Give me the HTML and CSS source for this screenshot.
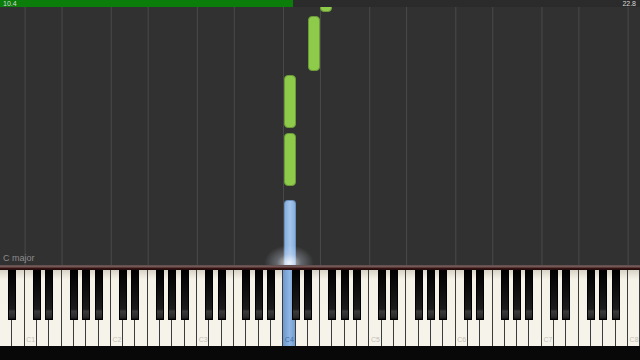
FILE: index.html
```html
<!DOCTYPE html>
<html lang="en">
<head>
    <meta charset="UTF-8">
    <meta name="viewport" content="width=device-width, initial-scale=1.0">
    <title>Piano roll</title>
    <link rel="stylesheet" href="styles.css">
</head>
<body>

    <div class="player">
        <div class="progress">
            <div class="progress-fill"></div>
            <span class="time time-now">10.4</span>
            <span class="time time-end">22.8</span>
        </div>

        <div class="roll">
            <div class="note green" style="left: 320px; top: -6px; height: 11px;"></div>
            <div class="note green" style="left: 308px; top: 9px; height: 55px;"></div>
            <div class="note green" style="left: 283.5px; top: 68px; height: 53px;"></div>
            <div class="note green" style="left: 283.5px; top: 126px; height: 53px;"></div>
            <div class="note blue" style="left: 283.5px; top: 193px; height: 70px;"></div>
            <div class="glow"></div>
            <span class="key-name">C major</span>
        </div>

        <div class="rail"></div>

        <div class="keys">
            <!-- A0 B0 -->
            <div class="key"><i class="black"></i></div>
            <div class="key"></div>
            <!-- octave 1 -->
            <div class="key"><span class="lbl">C1</span><i class="black"></i></div>
            <div class="key"><i class="black"></i></div>
            <div class="key"></div>
            <div class="key"><i class="black"></i></div>
            <div class="key"><i class="black"></i></div>
            <div class="key"><i class="black"></i></div>
            <div class="key"></div>
            <!-- octave 2 -->
            <div class="key"><span class="lbl">C2</span><i class="black"></i></div>
            <div class="key"><i class="black"></i></div>
            <div class="key"></div>
            <div class="key"><i class="black"></i></div>
            <div class="key"><i class="black"></i></div>
            <div class="key"><i class="black"></i></div>
            <div class="key"></div>
            <!-- octave 3 -->
            <div class="key"><span class="lbl">C3</span><i class="black"></i></div>
            <div class="key"><i class="black"></i></div>
            <div class="key"></div>
            <div class="key"><i class="black"></i></div>
            <div class="key"><i class="black"></i></div>
            <div class="key"><i class="black"></i></div>
            <div class="key"></div>
            <!-- octave 4 -->
            <div class="key on"><span class="lbl">C4</span><i class="black"></i></div>
            <div class="key"><i class="black"></i></div>
            <div class="key"></div>
            <div class="key"><i class="black"></i></div>
            <div class="key"><i class="black"></i></div>
            <div class="key"><i class="black"></i></div>
            <div class="key"></div>
            <!-- octave 5 -->
            <div class="key"><span class="lbl">C5</span><i class="black"></i></div>
            <div class="key"><i class="black"></i></div>
            <div class="key"></div>
            <div class="key"><i class="black"></i></div>
            <div class="key"><i class="black"></i></div>
            <div class="key"><i class="black"></i></div>
            <div class="key"></div>
            <!-- octave 6 -->
            <div class="key"><span class="lbl">C6</span><i class="black"></i></div>
            <div class="key"><i class="black"></i></div>
            <div class="key"></div>
            <div class="key"><i class="black"></i></div>
            <div class="key"><i class="black"></i></div>
            <div class="key"><i class="black"></i></div>
            <div class="key"></div>
            <!-- octave 7 -->
            <div class="key"><span class="lbl">C7</span><i class="black"></i></div>
            <div class="key"><i class="black"></i></div>
            <div class="key"></div>
            <div class="key"><i class="black"></i></div>
            <div class="key"><i class="black"></i></div>
            <div class="key"><i class="black"></i></div>
            <div class="key"></div>
            <!-- C8 -->
            <div class="key"><span class="lbl">C8</span></div>
        </div>

        <div class="base"></div>
    </div>

</body>
</html>
```

FILE: styles.css
```css
body {
    margin: 0;
    padding: 0;
    background-color: #000;
    font-family: "Liberation Sans", Arial, sans-serif;
}
.player {
    width: 640px;
    height: 360px;
    display: flex;
    flex-direction: column;
    overflow: hidden;
}
.progress {
    position: relative;
    height: 7px;
    flex: none;
    background-color: #2b2b2b;
    z-index: 2;
}
.progress-fill {
    width: 293px;
    height: 100%;
    background-color: #0a7d0a;
}
.time {
    position: absolute;
    top: 0;
    font-size: 7px;
    line-height: 7px;
    color: #d8d8d8;
}
.time-now {
    left: 3px;
}
.time-end {
    right: 4px;
}
.roll {
    position: relative;
    height: 258px;
    flex: none;
    overflow: hidden;
    background-color: #313131;
    background-image:
        linear-gradient(to right, #494949 1px, transparent 1px),
        linear-gradient(to right, #494949 1px, transparent 1px);
    background-size: 86.1538px 100%, 86.1538px 100%;
    background-position: 24.615px 0, 61.538px 0;
    background-repeat: repeat-x;
}
.note {
    position: absolute;
    width: 12px;
    box-sizing: border-box;
    border-radius: 4px;
}
.green {
    background-color: #8ecb4b;
    border: 1px solid #6c9a38;
}
.blue {
    background: linear-gradient(to right, #86afdd, #a4c5ea 50%, #86afdd);
    border: 1px solid #6a90c0;
    border-bottom: none;
    border-radius: 4px 4px 0 0;
}
.glow {
    position: absolute;
    left: 264px;
    bottom: -16px;
    width: 50px;
    height: 36px;
    background: radial-gradient(ellipse at center, rgba(255, 255, 255, 0.8) 0, rgba(210, 222, 240, 0.3) 35%, rgba(255, 255, 255, 0) 70%);
}
.key-name {
    position: absolute;
    left: 3px;
    bottom: 2px;
    font-size: 9px;
    color: #8c8c8c;
}
.rail {
    height: 5px;
    flex: none;
    background: linear-gradient(to bottom, #5e4d4d 0, #7a5b5b 40%, #3a1414 60%, #1e0a0a 100%);
}
.keys {
    height: 76px;
    flex: none;
    display: flex;
    background-color: #2a2a2a;
}
.key {
    position: relative;
    flex: 1;
    display: flex;
    flex-direction: column;
    justify-content: flex-end;
    align-items: center;
    background: linear-gradient(to bottom, #d8d3c6 0, #f5f2e8 12%, #f6f3ea 100%);
    box-shadow: inset -1px 0 #3c3c3c;
}
.key.on {
    background: linear-gradient(to right, #6d98cc, #8fb6e4 50%, #6d98cc);
}
.lbl {
    font-size: 7px;
    line-height: 7px;
    margin-bottom: 3px;
    color: #c4c0b6;
}
.on .lbl {
    color: #3f6ea8;
}
.black {
    position: absolute;
    top: 0;
    right: -4px;
    width: 8px;
    height: 50px;
    z-index: 1;
    box-sizing: border-box;
    border: 1px solid #000;
    border-top: none;
    background: linear-gradient(to bottom, #000 0, #1c1c1c 80%, #3a3a3a 84%, #2a2a2a 96%, #111 100%);
}
.base {
    height: 14px;
    flex: none;
    background-color: #080808;
}
```
